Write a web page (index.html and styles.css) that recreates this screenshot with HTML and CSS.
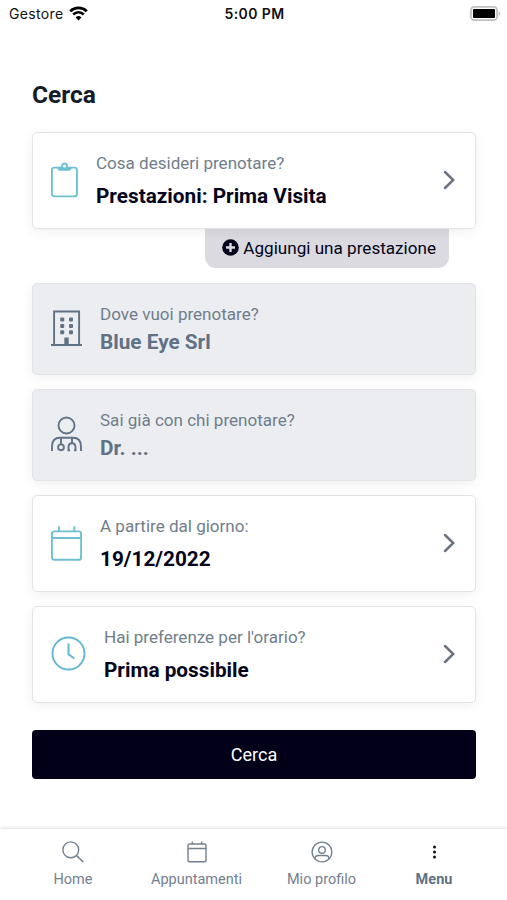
FILE: index.html
```
<!DOCTYPE html>
<html lang="it">
  <head>
    <meta charset="UTF-8" />
    <meta name="viewport" content="width=device-width, initial-scale=1.0" />
    <title>Cerca</title>
    <link rel="stylesheet" href="styles.css">
  </head>
  <body>
    <header class="status">
      <div class="carrier">
        <span>Gestore</span>
        <svg width="19" height="15" viewBox="0 0 19 15">
          <path d="M1.2 5.2a12 12 0 0 1 16.600 0" fill="none" stroke="#000" stroke-width="2.700" />
          <path d="M4.200 8.500a7.600 7.600 0 0 1 10.600 0" fill="none" stroke="#000" stroke-width="2.500" />
          <path d="M9.500 14.400 6.600 11.400a4.200 4.200 0 0 1 5.800 0z" />
        </svg>
      </div>
      <div class="time">5:00 PM</div>
      <svg class="battery" width="31" height="15" viewBox="0 0 31 15">
        <rect x="0.900" y="0.900" width="26.200" height="13.200" rx="3.600" fill="#fff" stroke="#c0c0c0" stroke-width="1.800" />
        <rect x="3" y="3" width="22" height="9" rx="1" />
        <path d="M28.700 5.200v4.600c2-.8 2-3.800 0-4.600z" fill="#c0c0c0" />
      </svg>
    </header>

    <main>
      <h1>Cerca</h1>

      <div class="card first">
        <svg class="icon" width="27" height="36" viewBox="0 0 27 36" fill="none" stroke="#6cc0d2" stroke-width="1.900">
          <rect x="0.900" y="5.600" width="25" height="28.800" rx="2.400" />
          <path d="M6.500 5.600c0 2.200 1 3.200 2.700 3.200h8.600c1.700 0 2.700-1 2.700-3.200z" fill="#6cc0d2" stroke="none" />
          <circle cx="13.500" cy="4" r="2.500" fill="#fff" />
        </svg>
        <div class="text">
          <p class="label">Cosa desideri prenotare?</p>
          <p class="value">Prestazioni: Prima Visita</p>
        </div>
        <svg class="arrow" width="12" height="20" viewBox="0 0 12 20"><path d="M2 2 10.300 10 2 18" /></svg>
      </div>

      <div class="add">
        <svg width="17" height="17" viewBox="0 0 17 17">
          <circle cx="8.500" cy="8.500" r="8.300" fill="#03031a" />
          <path d="M8.500 4v9M4 8.500h9" stroke="#dadae0" stroke-width="2.400" />
        </svg>
        <span>Aggiungi una prestazione</span>
      </div>

      <div class="card disabled">
        <svg class="icon" width="31" height="36" viewBox="0 0 31 36" fill="none" stroke="#5f7286" stroke-width="1.900">
          <path d="M0 35h31M3.100 35V1.500h25V35" />
          <path d="M13.300 35v-7.500h4.400V35z" fill="#5f7286" stroke="none" />
          <g fill="#5f7286" stroke="none">
            <rect x="9.200" y="7.500" width="4" height="4" rx="1" />
            <rect x="18" y="7.500" width="4" height="4" rx="1" />
            <rect x="9.200" y="13.900" width="4" height="4" rx="1" />
            <rect x="18" y="13.900" width="4" height="4" rx="1" />
            <rect x="9.200" y="20.300" width="4" height="4" rx="1" />
            <rect x="18" y="20.300" width="4" height="4" rx="1" />
          </g>
        </svg>
        <div class="text">
          <p class="label">Dove vuoi prenotare?</p>
          <p class="value">Blue Eye Srl</p>
        </div>
      </div>

      <div class="card disabled">
        <svg class="icon" width="31" height="36" viewBox="0 0 31 36" fill="none" stroke="#5f7286" stroke-width="1.900">
          <circle cx="15.500" cy="9.500" r="8" />
          <path d="M1 35v-4.500c0-5.500 3-8.700 8-8.700h13c5 0 8 3.200 8 8.700V35" />
          <path d="M10 22v6.300M21 22v5.500" />
          <circle cx="10" cy="31.300" r="2.900" />
          <path d="M19 34.300h-1.500v-3c0-2.500 1.400-4 3.500-4s3.500 1.500 3.500 4v3H23" />
        </svg>
        <div class="text">
          <p class="label">Sai già con chi prenotare?</p>
          <p class="value">Dr. ...</p>
        </div>
      </div>

      <div class="card">
        <svg class="icon" width="31" height="36" viewBox="0 0 31 36" fill="none" stroke="#6cc0d2" stroke-width="1.900">
          <rect x="0.900" y="6.400" width="29.200" height="28.400" rx="2.400" />
          <path d="M1 13h29M8 1.200v5M23.300 1.200v5" />
        </svg>
        <div class="text">
          <p class="label">A partire dal giorno:</p>
          <p class="value">19/12/2022</p>
        </div>
        <svg class="arrow" width="12" height="20" viewBox="0 0 12 20"><path d="M2 2 10.300 10 2 18" /></svg>
      </div>

      <div class="card">
        <svg class="icon" width="35" height="35" viewBox="0 0 35 35" fill="none" stroke="#63b7d2" stroke-width="1.900">
          <circle cx="17.500" cy="17.500" r="16" />
          <path d="M17.500 7.500v10.700l5.800 4.300" stroke-width="2" />
        </svg>
        <div class="text">
          <p class="label">Hai preferenze per l'orario?</p>
          <p class="value">Prima possibile</p>
        </div>
        <svg class="arrow" width="12" height="20" viewBox="0 0 12 20"><path d="M2 2 10.300 10 2 18" /></svg>
      </div>

      <button class="search">Cerca</button>
    </main>

    <nav>
      <a>
        <svg width="22" height="22" viewBox="0 0 22 22">
          <circle cx="8.800" cy="8.800" r="7.900" />
          <path d="m14.500 14.500 6.700 6.500" stroke-width="1.700" />
        </svg>
        <span>Home</span>
      </a>
      <a>
        <svg width="22" height="22" viewBox="0 0 22 22">
          <rect x="2" y="3" width="18" height="17.800" rx="1.800" />
          <path d="M2 7.500h18M6.300 0.500V3M15.700 0.500V3" />
        </svg>
        <span>Appuntamenti</span>
      </a>
      <a>
        <svg width="22" height="22" viewBox="0 0 22 22">
          <circle cx="11" cy="11" r="9.900" />
          <circle cx="11" cy="8.900" r="3.300" />
          <path d="M4 18v-.5c0-2 1.500-3 3.500-3h7c2 0 3.500 1 3.500 3v.5" />
        </svg>
        <span>Mio profilo</span>
      </a>
      <a class="active">
        <svg width="22" height="22" viewBox="0 0 22 22">
          <g fill="#111" stroke="none">
            <circle cx="11.500" cy="5.900" r="1.500" />
            <circle cx="11.500" cy="11" r="1.500" />
            <circle cx="11.500" cy="16.100" r="1.500" />
          </g>
        </svg>
        <span>Menu</span>
      </a>
    </nav>
  </body>
</html>
```
FILE: styles.css
```
* {
  box-sizing: border-box;
}

body {
  display: flex;
  flex-direction: column;
  height: 900px;
  margin: 0;
  overflow: hidden;
  font-family: Roboto, sans-serif;
  color: #03031a;
  background: #fff;
}

h1,
p {
  margin: 0;
}

.status {
  display: grid;
  grid-template-columns: 1fr auto 1fr;
  align-items: center;
  height: 27px;
  padding: 0 6px 0 9px;
  font-family: Inter, sans-serif;
  font-size: 14px;
  color: #111;
}

.carrier {
  display: flex;
  align-items: center;
  gap: 5px;
  letter-spacing: 0.35px;
}

.time {
  margin-right: 1px;
  font-weight: 600;
  letter-spacing: 0.4px;
}

.battery {
  justify-self: end;
}

main {
  flex: 1;
  display: flex;
  flex-direction: column;
  padding: 53px 31px 0 32px;
}

h1 {
  height: 30px;
  margin-bottom: 22px;
  font-size: 24.5px;
  font-weight: 700;
  line-height: 30px;
  color: #141c2b;
}

.card {
  display: flex;
  align-items: center;
  height: 97px;
  margin-bottom: 14px;
  padding: 0 20px 2px 18px;
  border: 1px solid #e2e3e5;
  border-radius: 5px;
  background: #fff;
  box-shadow: 0 3px 12px rgba(0, 0, 0, 0.06);
}

.card.first {
  margin-bottom: 0;
  z-index: 1;
}

.card.disabled {
  height: 92px;
  padding-bottom: 3px;
  background: #ecedf1;
}

.icon {
  flex: none;
  margin-right: 18px;
}

.text {
  flex: 1;
}

.label {
  font-size: 17.05px;
  line-height: 24px;
  color: #707e8c;
}

.value {
  margin-top: 9px;
  font-size: 20.75px;
  font-weight: 700;
  line-height: 24px;
}

.disabled .value {
  margin-top: 4px;
  color: #5f7286;
}

.arrow path {
  fill: none;
  stroke: #687282;
  stroke-width: 2.5;
  stroke-linecap: round;
}

.add {
  display: flex;
  align-self: flex-end;
  align-items: center;
  gap: 4px;
  height: 39px;
  margin: 0 27px 15px 0;
  padding: 0 13px 2px 17px;
  border-radius: 0 0 11px 11px;
  font-size: 17.1px;
  background: #dadae0;
}

.search {
  height: 49px;
  margin-top: 13px;
  border: 0;
  border-radius: 4px;
  font-family: inherit;
  font-size: 18px;
  color: #fff;
  background: #020019;
}

nav {
  display: grid;
  grid-template-columns: 124px 123px 127px 98px;
  height: 71px;
  padding: 12px 0 0 11px;
  box-shadow: 0 -1px 3px rgba(0, 0, 0, 0.14);
}

nav a {
  display: flex;
  flex-direction: column;
  align-items: center;
  gap: 8px;
  font-size: 14.5px;
  line-height: 18px;
  color: #738090;
}

nav svg {
  fill: none;
  stroke: #738090;
  stroke-width: 1.4;
}

nav .active {
  font-weight: 700;
  color: #5f7286;
}
```
